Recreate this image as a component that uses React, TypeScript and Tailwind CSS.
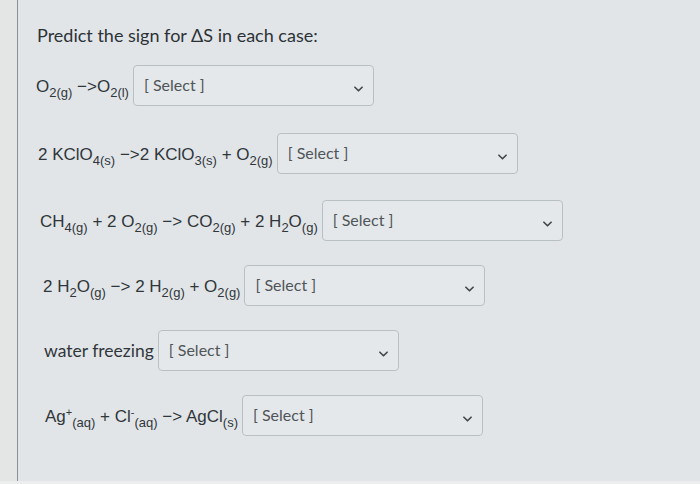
import type { ReactNode } from 'react';

function Sub({ children }: { children: ReactNode }) {
  return <span className="relative top-[5px] text-[13px] leading-none">{children}</span>;
}

function Sup({ children }: { children: ReactNode }) {
  return <span className="relative -top-[6px] text-[11px] leading-none">{children}</span>;
}

function SelectBox() {
  return (
    <div className="w-[241px] h-[41px] shrink-0 rounded-[4px] border border-[#b9c0c4] bg-[#e5e8ea] flex items-start justify-between pl-[10px] pr-[10px] pt-[7px]">
      <span className="text-[16px] text-[#4f5559]" style={{ fontFamily: 'Lato, sans-serif' }}>
        [ Select ]
      </span>
      <svg viewBox="0 0 10 6" className="w-[9px] h-[6px] mt-[13px] text-[#3f464b]">
        <path d="M1 1l4 4 4-4" fill="none" stroke="currentColor" strokeWidth="1.8" strokeLinecap="round" strokeLinejoin="round" />
      </svg>
    </div>
  );
}

function Row({ className, label, lato }: { className: string; label: ReactNode; lato?: boolean }) {
  return (
    <div className={`flex items-center gap-[4px] ${className}`}>
      <div
        className={`${lato ? 'text-[17.5px]' : 'text-[17px]'} text-[#30363a] whitespace-nowrap pt-[2px]`}
        style={{ fontFamily: lato ? 'Lato, sans-serif' : '"Liberation Sans", Arial, sans-serif' }}
      >
        {label}
      </div>
      <SelectBox />
    </div>
  );
}

export default function App() {
  return (
    <div className="w-[700px] h-[484px] bg-[#e4e6e6] overflow-hidden" style={{ fontFamily: 'Lato, sans-serif' }}>
      <div className="ml-[17px] h-[481px] border-l border-[#8d9296] bg-[#e1e5e8] flex flex-col">
        <h1 className="ml-[19px] mt-[23px] text-[18px] text-[#2c3236] leading-[24px]">
          Predict the sign for ΔS in each case:
        </h1>

        <Row
          className="ml-[18px] mt-[18px]"
          label={
            <>
              O<Sub>2(g)</Sub> −&gt;O<Sub>2(l)</Sub>
            </>
          }
        />
        <Row
          className="ml-[20px] mt-[27px]"
          label={
            <>
              2 KClO<Sub>4(s)</Sub> −&gt;2 KClO<Sub>3(s)</Sub> + O<Sub>2(g)</Sub>
            </>
          }
        />
        <Row
          className="ml-[22px] mt-[26px]"
          label={
            <>
              CH<Sub>4(g)</Sub> + 2 O<Sub>2(g)</Sub> −&gt; CO<Sub>2(g)</Sub> + 2 H<Sub>2</Sub>O<Sub>(g)</Sub>
            </>
          }
        />
        <Row
          className="ml-[25px] mt-[24px]"
          label={
            <>
              2 H<Sub>2</Sub>O<Sub>(g)</Sub> −&gt; 2 H<Sub>2(g)</Sub> + O<Sub>2(g)</Sub>
            </>
          }
        />
        <Row className="ml-[26px] mt-[24px]" lato label={<>water freezing</>} />
        <Row
          className="ml-[27px] mt-[24px]"
          label={
            <>
              Ag<Sup>+</Sup>
              <Sub>(aq)</Sub> + Cl<Sup>-</Sup>
              <Sub>(aq)</Sub> −&gt; AgCl<Sub>(s)</Sub>
            </>
          }
        />
      </div>
      <div className="h-[3px] bg-[#eceeee]" />
    </div>
  );
}
